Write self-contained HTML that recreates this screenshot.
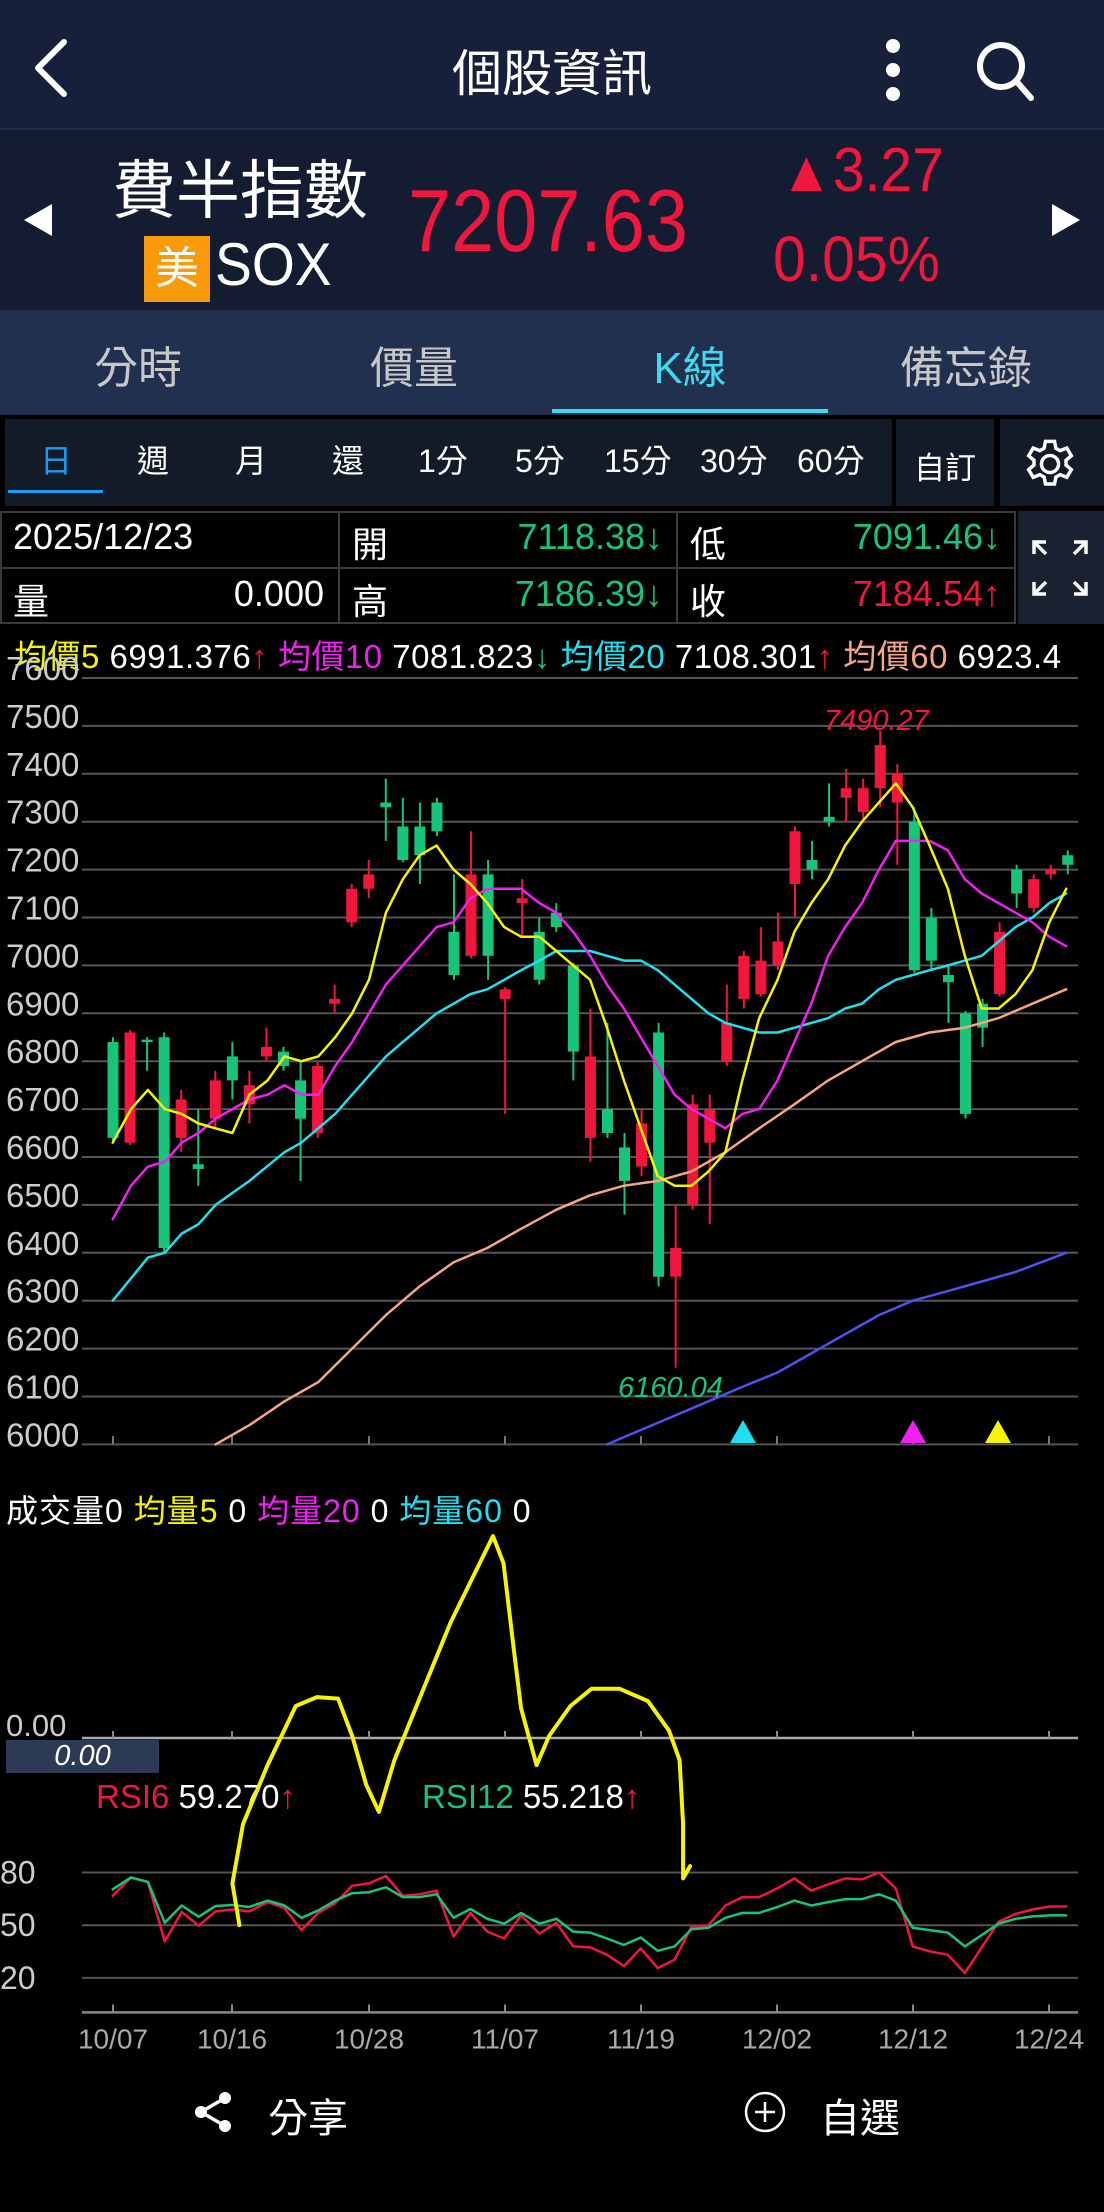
<!DOCTYPE html>
<html><head><meta charset="utf-8">
<style>
*{margin:0;padding:0;box-sizing:border-box}
body{width:1104px;height:2212px;background:#000;font-family:"Liberation Sans","Noto Sans CJK TC",sans-serif;color:#fff;position:relative;overflow:hidden}
.a{position:absolute;white-space:nowrap}
.cell{position:absolute;border:2px solid #3a3a3a;background:#000}
</style></head><body>
<div class="a" style="left:0;top:0;width:1104px;height:128px;background:#16203a"></div>
<svg class="a" style="left:30px;top:38px" width="40" height="60"><path d="M34 4 L8 30 L34 56" stroke="#fff" stroke-width="6" fill="none" stroke-linecap="round" stroke-linejoin="round"/></svg>
<div class="a" style="left:0;width:1104px;top:34px;text-align:center;font-size:50px">個股資訊</div>
<svg class="a" style="left:880px;top:38px" width="30" height="66"><circle cx="13" cy="8" r="7" fill="#fff"/><circle cx="13" cy="32" r="7" fill="#fff"/><circle cx="13" cy="56" r="7" fill="#fff"/></svg>
<svg class="a" style="left:975px;top:40px" width="60" height="62"><circle cx="26" cy="26" r="21" stroke="#fff" stroke-width="6" fill="none"/><path d="M42 42 L56 58" stroke="#fff" stroke-width="6" stroke-linecap="round"/></svg>
<div class="a" style="left:0;top:128px;width:1104px;height:182px;background:#131c30;border-top:2px solid #1f2c48"></div>
<svg class="a" style="left:20px;top:202px" width="36" height="36"><path d="M32 2 L4 18 L32 34Z" fill="#fff"/></svg>
<svg class="a" style="left:1048px;top:202px" width="36" height="36"><path d="M4 2 L32 18 L4 34Z" fill="#fff"/></svg>
<div class="a" style="left:112px;top:140px;font-size:64px;color:#fff">費半指數</div>
<div class="a" style="left:144px;top:236px;width:66px;height:66px;background:#f99a0a;color:#fff;font-size:44px;text-align:center;line-height:66px">美</div>
<div class="a" style="left:215px;top:230px;font-size:60px;transform:scaleX(0.92);transform-origin:left">SOX</div>
<div class="a" style="left:408px;top:170px;font-size:88px;color:#f0163e;transform:scaleX(0.88);transform-origin:left">7207.63</div>
<div class="a" style="left:780px;top:135px;font-size:62px;color:#f0163e;transform:scaleX(0.92);transform-origin:left"><span style="font-size:58px">▲</span>3.27</div>
<div class="a" style="left:773px;top:222px;font-size:64px;color:#f0163e;transform:scaleX(0.92);transform-origin:left">0.05%</div>
<div class="a" style="left:0;top:310px;width:1104px;height:105px;background:#22304f"></div>
<div class="a" style="top:332px;left:0;width:276px;text-align:center;font-size:44px;color:#c8c8c8">分時</div>
<div class="a" style="top:332px;left:276px;width:276px;text-align:center;font-size:44px;color:#c8c8c8">價量</div>
<div class="a" style="top:332px;left:552px;width:276px;text-align:center;font-size:44px;color:#3fd8ee">K線</div>
<div class="a" style="top:332px;left:828px;width:276px;text-align:center;font-size:44px;color:#c8c8c8">備忘錄</div>
<div class="a" style="left:552px;top:409px;width:276px;height:4px;background:#3fd8ee"></div>
<div class="a" style="left:5px;top:419px;width:887px;height:87px;background:#121b27"></div>
<div class="a" style="left:896px;top:419px;width:98px;height:87px;background:#121b27"></div>
<div class="a" style="left:1000px;top:419px;width:104px;height:87px;background:#121b27"></div>
<div class="a" style="left:8px;top:490px;width:95px;height:3px;background:#1a9cf0"></div>
<div class="a" style="top:436px;font-size:32px;left:0;width:892px;height:40px">
<span class="a" style="left:40px;color:#1a9cf0">日</span><span class="a" style="left:137px">週</span><span class="a" style="left:235px">月</span><span class="a" style="left:332px">還</span><span class="a" style="left:418px">1分</span><span class="a" style="left:515px">5分</span><span class="a" style="left:604px">15分</span><span class="a" style="left:700px">30分</span><span class="a" style="left:797px">60分</span></div>
<div class="a" style="left:914px;top:443px;font-size:31px">自訂</div>
<svg class="a" style="left:1018px;top:432px" width="64" height="64" viewBox="0 0 24 24"><path fill="none" stroke="#fff" stroke-width="1.3" d="M10.3 2h3.4l.5 2.6 1.6.9 2.5-1 1.7 2.9-2 1.7v1.8l2 1.7-1.7 2.9-2.5-1-1.6.9-.5 2.6h-3.4l-.5-2.6-1.6-.9-2.5 1-1.7-2.9 2-1.7V9.1l-2-1.7 1.7-2.9 2.5 1 1.6-.9z" transform="translate(0 1.5)"/><circle cx="12" cy="12" r="3.2" fill="none" stroke="#fff" stroke-width="1.3"/></svg>
<div class="cell" style="left:0;top:511px;width:340px;height:58px"></div>
<div class="cell" style="left:338px;top:511px;width:340px;height:58px"></div>
<div class="cell" style="left:676px;top:511px;width:340px;height:58px"></div>
<div class="cell" style="left:0;top:567px;width:340px;height:57px"></div>
<div class="cell" style="left:338px;top:567px;width:340px;height:57px"></div>
<div class="cell" style="left:676px;top:567px;width:340px;height:57px"></div>
<div class="a" style="left:1018px;top:511px;width:86px;height:113px;background:#1a2231"></div>
<div style="font-size:36px">
<span class="a" style="left:13px;top:516px">2025/12/23</span>
<span class="a" style="left:352px;top:516px">開</span><span class="a" style="left:460px;width:203px;text-align:right;top:516px;color:#16c47a">7118.38↓</span>
<span class="a" style="left:690px;top:516px">低</span><span class="a" style="left:798px;width:203px;text-align:right;top:516px;color:#16c47a">7091.46↓</span>
<span class="a" style="left:13px;top:573px">量</span><span class="a" style="left:150px;width:174px;text-align:right;top:573px">0.000</span>
<span class="a" style="left:352px;top:573px">高</span><span class="a" style="left:460px;width:203px;text-align:right;top:573px;color:#16c47a">7186.39↓</span>
<span class="a" style="left:690px;top:573px">收</span><span class="a" style="left:798px;width:203px;text-align:right;top:573px;color:#f0163e">7184.54↑</span>
</div>
<svg class="a" style="left:1030px;top:538px" width="60" height="60" fill="none" stroke="#fff" stroke-width="3.5"><path d="M4 16V4h12M4 4l12 12M56 16V4H44M56 4L44 16M4 44v12h12M4 56l12-12M56 44v12H44M56 56L44 44"/></svg>
<div class="a" style="left:14px;top:630px;font-size:33px;letter-spacing:0.5px"><span style="color:#f5f500">均價5</span> 6991.376<span style="color:#f0163e">↑</span> <span style="color:#f020f0">均價10</span> 7081.823<span style="color:#16c47a">↓</span> <span style="color:#20e0f0">均價20</span> 7108.301<span style="color:#f0163e">↑</span> <span style="color:#f4a583">均價60</span> 6923.4</div>
<div class="a" style="left:6px;top:1486px;font-size:32px;letter-spacing:1px">成交量0 <span style="color:#f5f500">均量5</span> 0 <span style="color:#f020f0">均量20</span> 0 <span style="color:#20e0f0">均量60</span> 0</div>
<div class="a" style="left:6px;top:1708px;font-size:31px;color:#ccc">0.00</div>
<div class="a" style="left:6px;top:1740px;width:153px;height:33px;background:#2c3a56;font-size:29px;font-style:italic;text-align:center;line-height:33px">0.00</div>
<div class="a" style="left:96px;top:1778px;font-size:33px"><span style="color:#f0163e">RSI6</span> 59.270<span style="color:#f0163e">↑</span></div>
<div class="a" style="left:422px;top:1778px;font-size:33px"><span style="color:#16c47a">RSI12</span> 55.218<span style="color:#f0163e">↑</span></div>
<svg id="ch" class="a" style="left:0;top:0" width="1104" height="2212"></svg>
<svg class="a" style="left:192px;top:2090px" width="44" height="44"><circle cx="33" cy="8" r="6" fill="#fff"/><circle cx="9" cy="22" r="6" fill="#fff"/><circle cx="33" cy="36" r="6" fill="#fff"/><path d="M33 8L9 22L33 36" stroke="#fff" stroke-width="3.5" fill="none"/></svg>
<div class="a" style="left:268px;top:2086px;font-size:40px">分享</div>
<svg class="a" style="left:743px;top:2090px" width="44" height="44"><circle cx="22" cy="22" r="19" stroke="#fff" stroke-width="2.5" fill="none"/><path d="M22 12v20M12 22h20" stroke="#fff" stroke-width="2.5"/></svg>
<div class="a" style="left:820px;top:2086px;font-size:40px">自選</div>
<script>
var s='';function X(z){return z/1.42}
function Y(p){return 678+(7600-p)*0.479}
for(var i=0;i<=16;i++){var p=7600-i*100,y=Y(p);s+='<line x1="82" x2="1078" y1="'+y+'" y2="'+y+'" stroke="#555" stroke-width="2"/>';s+='<text x="6" y="'+(y+2)+'" fill="#ccc" font-size="33" font-family="Liberation Sans">'+p+'</text>';}
var tk=[113,232,369,505,641,777,913,1049];
tk.forEach(function(t){s+='<line x1="'+t+'" x2="'+t+'" y1="1436" y2="1444" stroke="#777" stroke-width="2"/>';});
var C=[[6840,6640,6850,6630],[6630,6860,6865,6625],[6845,6840,6850,6780],[6850,6410,6860,6400],[6640,6720,6740,6610],[6585,6575,6700,6540],[6680,6760,6780,6660],[6810,6760,6840,6720],[6710,6750,6780,6670],[6810,6830,6870,6800],[6820,6790,6830,6780],[6760,6680,6800,6550],[6650,6790,6800,6640],[6920,6930,6960,6900],[7090,7160,7170,7080],[7160,7190,7220,7140],[7340,7330,7390,7260],[7290,7220,7350,7215],[7290,7230,7340,7170],[7340,7280,7350,7270],[7070,6980,7190,6970],[7020,7190,7280,7015],[7190,7020,7220,6970],[6930,6950,6955,6690],[7130,7140,7180,7060],[7070,6970,7100,6960],[7110,7080,7130,7070],[7000,6820,7005,6760],[6640,6810,6910,6590],[6700,6650,6880,6640],[6620,6550,6650,6480],[6580,6670,6700,6560],[6860,6350,6880,6330],[6350,6410,6500,6160],[6500,6710,6730,6490],[6630,6700,6730,6460],[6800,6880,6960,6790],[6930,7020,7030,6910],[6940,7010,7080,6935],[7000,7050,7110,6990],[7170,7280,7290,7100],[7220,7200,7260,7180],[7310,7300,7380,7290],[7350,7370,7410,7300],[7320,7370,7390,7300],[7370,7460,7490,7330],[7340,7400,7420,7210],[7300,6990,7330,6985],[7100,7010,7120,6990],[6980,6965,7000,6880],[6900,6690,6905,6680],[6920,6870,6930,6830],[6940,7070,7090,6935],[7200,7150,7210,7120],[7120,7180,7190,7110],[7190,7200,7210,7180],[7230,7210,7240,7190]];
C.forEach(function(c,i){var x=113+i*17.05,up=c[1]>=c[0],col=up?'#f0163e':'#16c47a';var t=Y(Math.max(c[0],c[1])),b=Y(Math.min(c[0],c[1]));if(b-t<2)b=t+2;
s+='<line x1="'+x+'" x2="'+x+'" y1="'+Y(c[2])+'" y2="'+Y(c[3])+'" stroke="'+col+'" stroke-width="2"/><rect x="'+(x-5.5)+'" y="'+t+'" width="11" height="'+(b-t)+'" fill="'+col+'"/>';});
function L(pts,col,fy,w){var d='';pts.forEach(function(p,i){d+=(i?'L':'M')+X(p[0]).toFixed(1)+' '+fy(p[1]).toFixed(1)});s+='<path d="'+d+'" stroke="'+col+'" stroke-width="'+(w||2.5)+'" fill="none" stroke-linejoin="round" stroke-linecap="round"/>';}
var xs=[160,186,210,234,258,282,306,330,354,380,404,428,452,476,500,524,548,572,596,620,644,668,692,716,740,766,790,814,838,862,886,910,934,958,982,1006,1030,1054,1078,1104,1128,1152,1176,1200,1224,1248,1272,1296,1320,1346,1370,1394,1418,1442,1466,1490,1514];
function Z(v){return v.map(function(q,i){return [xs[i],q]})}
L([[306,6000],[354,6040],[404,6090],[452,6130],[500,6200],[548,6270],[596,6330],[644,6380],[692,6410],[740,6450],[790,6490],[838,6520],[886,6540],[934,6550],[982,6570],[1030,6610],[1078,6660],[1128,6710],[1176,6760],[1224,6800],[1272,6840],[1320,6860],[1370,6870],[1418,6890],[1466,6920],[1514,6950]],'#f4a583',Y);
L([[862,6000],[910,6030],[958,6060],[1006,6090],[1054,6120],[1104,6150],[1152,6190],[1200,6230],[1248,6270],[1296,6300],[1346,6320],[1394,6340],[1442,6360],[1514,6400]],'#5050f0',Y);
L([[160,6300],[210,6390],[234,6400],[258,6440],[282,6460],[306,6500],[354,6550],[404,6610],[428,6630],[476,6690],[500,6730],[524,6770],[548,6810],[572,6840],[596,6870],[620,6900],[644,6920],[668,6940],[692,6950],[716,6970],[740,6990],[766,7010],[790,7030],[814,7030],[838,7030],[862,7020],[886,7010],[910,7010],[934,6990],[958,6960],[982,6930],[1006,6900],[1030,6880],[1054,6870],[1078,6860],[1104,6860],[1128,6870],[1152,6880],[1176,6890],[1200,6910],[1224,6920],[1248,6950],[1272,6970],[1296,6980],[1320,6990],[1346,7000],[1370,7010],[1394,7020],[1418,7050],[1442,7080],[1466,7100],[1490,7130],[1514,7150]],'#20e0f0',Y);
L(Z([6470,6540,6580,6590,6630,6650,6680,6700,6720,6730,6750,6730,6730,6790,6840,6900,6960,7000,7040,7080,7090,7140,7160,7160,7160,7130,7110,7070,7020,6960,6910,6850,6790,6730,6700,6680,6660,6690,6700,6760,6840,6920,7020,7080,7130,7200,7260,7260,7260,7240,7180,7150,7130,7110,7090,7060,7040]),'#f020f0',Y);
L(Z([6630,6700,6740,6700,6690,6670,6660,6650,6730,6760,6810,6800,6810,6850,6900,6970,7110,7180,7230,7250,7200,7170,7130,7080,7060,7060,7030,7000,6970,6870,6760,6660,6560,6540,6540,6570,6610,6760,6890,6970,7070,7130,7180,7250,7300,7340,7380,7330,7250,7160,7020,6910,6910,6940,6990,7090,7160]),'#f5f500',Y);
s+='<text x="824" y="730" fill="#f0163e" font-size="29" font-style="italic" font-family="Liberation Sans">7490.27</text>';
s+='<text x="618" y="1397" fill="#16c47a" font-size="29" font-style="italic" font-family="Liberation Sans">6160.04</text>';
[[743,'#20e0f0'],[913,'#f020f0'],[998,'#f5f500']].forEach(function(t){s+='<path d="M'+(t[0]-13)+' 1443L'+t[0]+' 1420L'+(t[0]+13)+' 1443Z" fill="'+t[1]+'"/>';});
s+='<line x1="82" x2="1078" y1="1738" y2="1738" stroke="#aaa" stroke-width="2.5"/>';
tk.forEach(function(t){s+='<line x1="'+t+'" x2="'+t+'" y1="1731" y2="1738" stroke="#888" stroke-width="2"/>';});
function R(zy){return 1440+zy/2.03}
[[878,'80'],[985,'50'],[1092,'20']].forEach(function(g){var y=R(g[0]);s+='<line x1="82" x2="1078" y1="'+y+'" y2="'+y+'" stroke="#555" stroke-width="2"/><text x="0" y="'+(y+11)+'" fill="#ccc" font-size="32" font-family="Liberation Sans">'+g[1]+'</text>';});
var ay=R(1162);s+='<line x1="82" x2="1078" y1="'+ay+'" y2="'+ay+'" stroke="#888" stroke-width="2.5"/>';
var dl=['10/07','10/16','10/28','11/07','11/19','12/02','12/12','12/24'];
tk.forEach(function(t,i){s+='<line x1="'+t+'" x2="'+t+'" y1="'+(ay-8)+'" y2="'+ay+'" stroke="#888" stroke-width="2"/><text x="'+t+'" y="'+(ay+36)+'" text-anchor="middle" fill="#aaa" font-size="28" font-family="Liberation Sans">'+dl[i]+'</text>';});
L(Z([925,888,897,1018,958,986,957,953,957,938,950,995,960,940,905,900,885,925,922,915,1008,960,998,1012,965,1002,980,1028,1030,1045,1068,1032,1072,1055,988,985,945,928,928,910,890,915,902,890,892,878,910,1028,1038,1045,1082,1030,978,962,953,947,947]),'#f0163e',R);
L(Z([912,888,897,980,945,968,946,944,948,935,945,970,955,935,920,918,908,928,928,922,970,952,972,982,960,982,972,998,1000,1012,1025,1010,1037,1028,993,990,970,960,960,948,935,945,938,932,932,922,935,990,995,1000,1028,1005,982,972,967,965,965]),'#16c47a',R);
L([[340,985],[330,900],[345,780],[380,660],[420,540],[450,522],[480,525],[500,600],[520,700],[538,755],[560,650],[600,510],[640,370],[700,195],[715,250],[730,430],[740,545],[762,660],[780,600],[810,540],[840,505],[880,505],[920,530],[950,590],[965,650],[970,780],[970,890],[980,865]],'#f5f500',R,4);
document.getElementById('ch').innerHTML=s;
</script>
</body></html>
